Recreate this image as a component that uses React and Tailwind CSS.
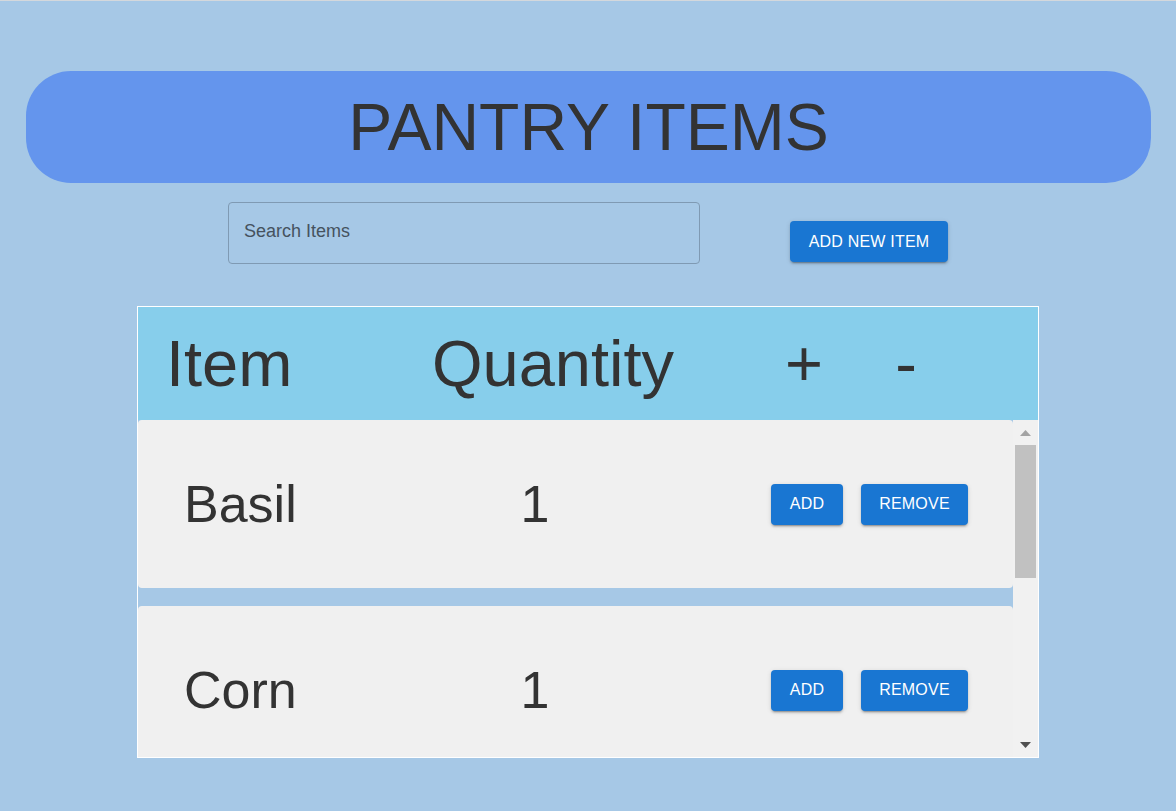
import React, { useState } from 'react';

const items = [
  { name: 'Basil', quantity: 1 },
  { name: 'Corn', quantity: 1 },
];

const btn =
  'bg-[#1976d2] text-white text-[16px] uppercase tracking-[0.2px] h-[41px] rounded-[4px] shadow-[0_3px_1px_-2px_rgba(0,0,0,0.2),0_2px_2px_0_rgba(0,0,0,0.14),0_1px_5px_0_rgba(0,0,0,0.12)] hover:bg-[#1565c0]';

const ItemRow = ({ item }) => (
  <div className="flex items-center h-[168px] shrink-0 mb-[18px] bg-[#f0f0f0] rounded-[4px] pl-[46px] pr-[45px] text-[#333]">
    <span className="w-[301px] text-[52px] leading-none">{item.name}</span>
    <span className="w-[100px] text-center text-[52px] leading-none">{item.quantity}</span>
    <div className="ml-auto flex gap-[18px]">
      <button className={`${btn} w-[72px]`}>Add</button>
      <button className={`${btn} w-[107px]`}>Remove</button>
    </div>
  </div>
);

// barra de rolagem desenhada (a nativa fica escondida)
const ScrollBar = () => (
  <div className="w-[25px] shrink-0 bg-[#f1f1f1] flex flex-col">
    <div className="h-[25px] flex items-center justify-center">
      <svg width="11" height="6" viewBox="0 0 11 6">
        <polygon points="0,6 5.5,0 11,6" fill="#a3a3a3" />
      </svg>
    </div>
    <div className="ml-[2px] w-[21px] h-[133px] bg-[#c1c1c1]" />
    <div className="mt-auto h-[25px] flex items-center justify-center">
      <svg width="11" height="6" viewBox="0 0 11 6">
        <polygon points="0,0 11,0 5.5,6" fill="#505050" />
      </svg>
    </div>
  </div>
);

export default function App() {
  const [search, setSearch] = useState('');

  const filtered = items.filter(i => i.name.toLowerCase().includes(search.toLowerCase()));

  return (
    <div className="min-h-[811px] bg-[#a6c8e6] border-t border-[#d4d8dc] font-['Liberation_Sans',Arial,sans-serif] text-[#333]">
      {/* Título */}
      <div className="mt-[70px] ml-[26px] mr-[25px] h-[112px] rounded-[45px] bg-[#6495ed] flex items-center justify-center">
        <h1 className="text-[66px] leading-none">PANTRY ITEMS</h1>
      </div>

      {/* Busca */}
      <div className="flex justify-center items-start gap-[90px] mt-[19px]">
        <input
          type="text"
          placeholder="Search Items"
          value={search}
          onChange={e => setSearch(e.target.value)}
          className="w-[472px] h-[62px] px-[15px] pb-[3px] bg-transparent border border-[#7f9ab3] rounded-[4px] text-[18px] placeholder:text-[#45525e] focus:outline-none"
        />
        <button className={`${btn} w-[158px] mt-[19px]`}>Add new item</button>
      </div>

      {/* Tabela */}
      <div className="mx-auto mt-[42px] w-[902px] border border-white">
        <div className="flex items-center h-[113px] bg-[#87ceeb] pl-[28px] text-[65px] leading-none">
          <span className="w-[266px]">Item</span>
          <span className="w-[342px]">Quantity</span>
          <span className="w-[60px] text-center">+</span>
          <span className="w-[60px] ml-[42px] text-center">-</span>
        </div>
        <div className="flex h-[337px]">
          <div className="flex-1 flex flex-col overflow-y-scroll [scrollbar-width:none]">
            {filtered.map(item => (
              <ItemRow key={item.name} item={item} />
            ))}
          </div>
          <ScrollBar />
        </div>
      </div>
    </div>
  );
}
